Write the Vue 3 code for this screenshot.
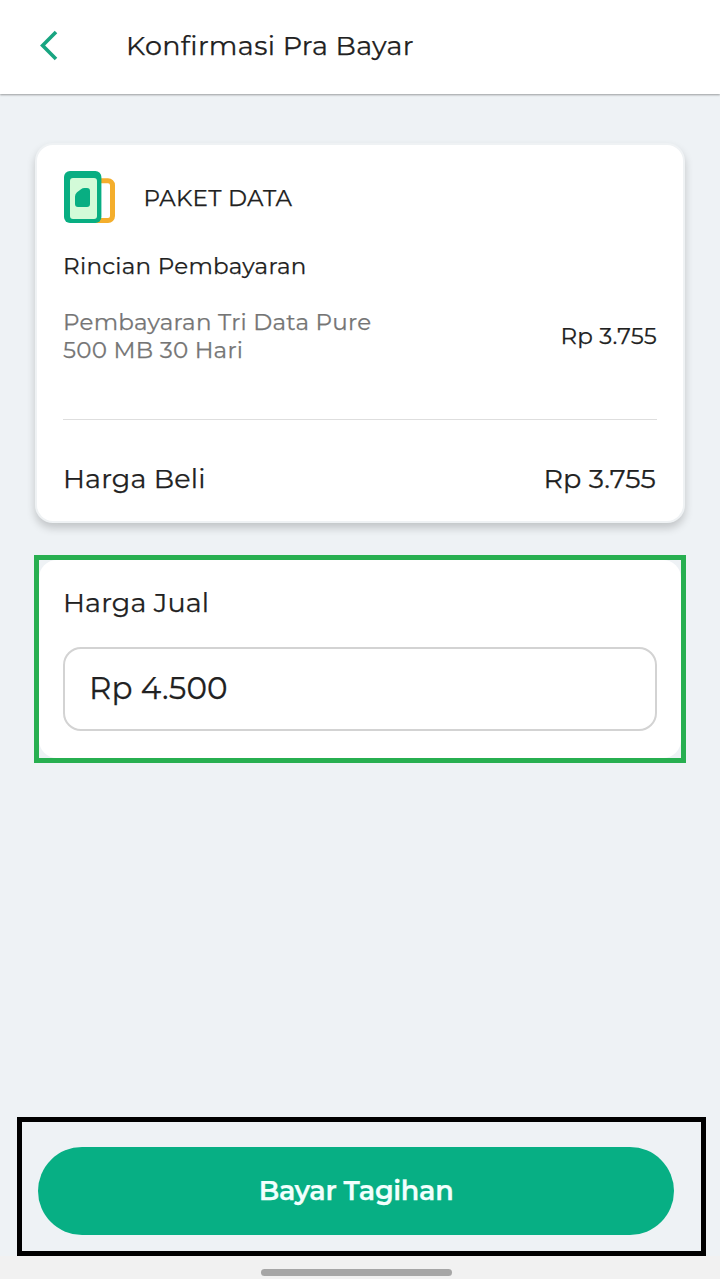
<script setup>
  import { ref, computed } from 'vue';

  const detail = {
    category: 'PAKET DATA',
    description: 'Pembayaran Tri Data Pure 500 MB 30 Hari',
    amount: 3755
  }

  const sellPrice = ref(4500)

  const numberFormatter = new Intl.NumberFormat("id-ID")

  const currency = (value) => `Rp ${numberFormatter.format(value)}`

  const buyAmount = computed(() => currency(detail.amount))
  const sellAmount = computed(() => currency(sellPrice.value))
</script>


<template>
  <div class="screen">
    <header class="header">
      <svg class="back" width="20" height="32" viewBox="0 0 20 32" fill="none">
        <path d="M18 2 L4.6 15.5 L18 29" stroke="#18a581" stroke-width="3.6" />
      </svg>
      <h1>Konfirmasi Pra Bayar</h1>
    </header>

    <main class="content">
      <section class="card">
        <div class="category">
          <svg width="52" height="53" viewBox="0 0 52 53">
            <rect x="27.5" y="9.8" width="21" height="39.8" rx="4.5" fill="none" stroke="#f4ae2c" stroke-width="5" />
            <rect x="0" y="0" width="37.4" height="52" rx="6" fill="#08ae82" />
            <rect x="6" y="7" width="27" height="41" rx="3" fill="#d3fbd8" />
            <path d="M11 25.5 Q11 23 13 21.3 L17 18.2 Q18.5 17 20.5 17 H23 Q26 17 26 20 V33 Q26 36 23 36 H14 Q11 36 11 33 Z" fill="#08ae82" />
          </svg>
          <span>{{ detail.category }}</span>
        </div>
        <h2>Rincian Pembayaran</h2>
        <div class="item">
          <p class="description">{{ detail.description }}</p>
          <span class="amount">{{ buyAmount }}</span>
        </div>
        <div class="total">
          <span>Harga Beli</span>
          <span>{{ buyAmount }}</span>
        </div>
      </section>

      <section class="sell">
        <div class="sell-body">
          <span class="sell-label">Harga Jual</span>
          <div class="field"><span>{{ sellAmount }}</span></div>
        </div>
      </section>
    </main>

    <footer class="footer">
      <button class="pay"><span>Bayar Tagihan</span></button>
    </footer>
    <div class="nav">
      <div class="handle"></div>
    </div>
  </div>
</template>

<style>
body {
  background-color: #eef2f5;
}
</style>

<style scoped>
.screen {
  display: flex;
  flex-direction: column;
  width: 720px;
  height: 1279px;
  overflow: hidden;
  background-color: #eef2f5;
  color: #212121;
  font-family: Montserrat, Inter, sans-serif;
  white-space: nowrap;
  -webkit-text-stroke: 0.25px currentColor;
}

h1,
h2,
p {
  margin: 0;
  font-weight: 400;
}

.header {
  display: flex;
  align-items: center;
  flex-shrink: 0;
  height: 94px;
  padding: 0 0 3px 38px;
  box-sizing: border-box;
  background-color: #fff;
  box-shadow: 0 1px 2px rgba(0, 0, 0, 0.36);
}

.header h1 {
  margin-left: 68px;
  padding-top: 1px;
  font-size: 27px;
  line-height: 32px;
  letter-spacing: 0.35px;
}

.content {
  display: flex;
  flex-direction: column;
  flex: 1;
  padding: 49px 34px 0;
}

.card {
  display: flex;
  flex-direction: column;
  height: 380px;
  margin: 0 1px;
  padding: 26px 26px 0;
  box-sizing: border-box;
  background-color: #fff;
  border: 2px solid #eff2f4;
  border-radius: 18px;
  box-shadow: 0 5px 9px rgba(0, 0, 0, 0.19);
}

.category {
  display: flex;
  align-items: center;
  height: 53px;
  padding-left: 1px;
}

.category span {
  margin-left: 27.5px;
  font-size: 23px;
  line-height: 28px;
  letter-spacing: 0.25px;
}

.card h2 {
  margin-top: 28px;
  font-size: 23px;
  line-height: 28px;
  letter-spacing: 0.28px;
}

.item {
  display: flex;
  justify-content: space-between;
  align-items: flex-start;
  height: 112px;
  margin-top: 28px;
  box-sizing: border-box;
  border-bottom: 1px solid #dedede;
}

.description {
  width: 330px;
  font-size: 23px;
  line-height: 28px;
  letter-spacing: 0.26px;
  color: #757575;
  white-space: normal;
}

.amount {
  margin-top: 14px;
  font-size: 23px;
  line-height: 28px;
  letter-spacing: 0.22px;
}

.total {
  display: flex;
  justify-content: space-between;
  margin-top: 43px;
  padding-right: 1px;
  font-size: 27px;
  line-height: 32px;
  letter-spacing: 0.15px;
}

.sell {
  height: 208px;
  margin-top: 32px;
  box-sizing: border-box;
  border: 5px solid #27af50;
}

.sell-body {
  display: flex;
  flex-direction: column;
  height: 198px;
  padding: 27px 24px 0;
  box-sizing: border-box;
  background-color: #fff;
  border-radius: 18px;
}

.sell-label {
  font-size: 27px;
  line-height: 32px;
  letter-spacing: 0.15px;
}

.field {
  display: flex;
  align-items: center;
  height: 84px;
  margin-top: 28px;
  padding: 0 0 2px 24px;
  box-sizing: border-box;
  border: 2px solid #d3d3d3;
  border-radius: 18px;
  font-size: 31px;
  letter-spacing: 0.1px;
}

.footer {
  display: flex;
  flex-shrink: 0;
  height: 139px;
  margin: 0 14px 0 17px;
  padding: 25px 27px 0 16px;
  box-sizing: border-box;
  border: 5px solid #000;
}

.pay {
  flex: 1;
  height: 88px;
  padding: 0 0 2px;
  background-color: #07af84;
  border: 0;
  border-radius: 44px;
  color: #f2fffd;
  font-family: inherit;
  font-size: 27px;
  font-weight: 600;
  letter-spacing: -0.3px;
}

.nav {
  display: flex;
  justify-content: center;
  flex-shrink: 0;
  height: 23px;
  padding: 13px 8px 0 0;
  box-sizing: border-box;
  background-color: #f1f1f1;
}

.handle {
  width: 191px;
  height: 7px;
  border-radius: 4px;
  background-color: #a6a6a6;
}
</style>
